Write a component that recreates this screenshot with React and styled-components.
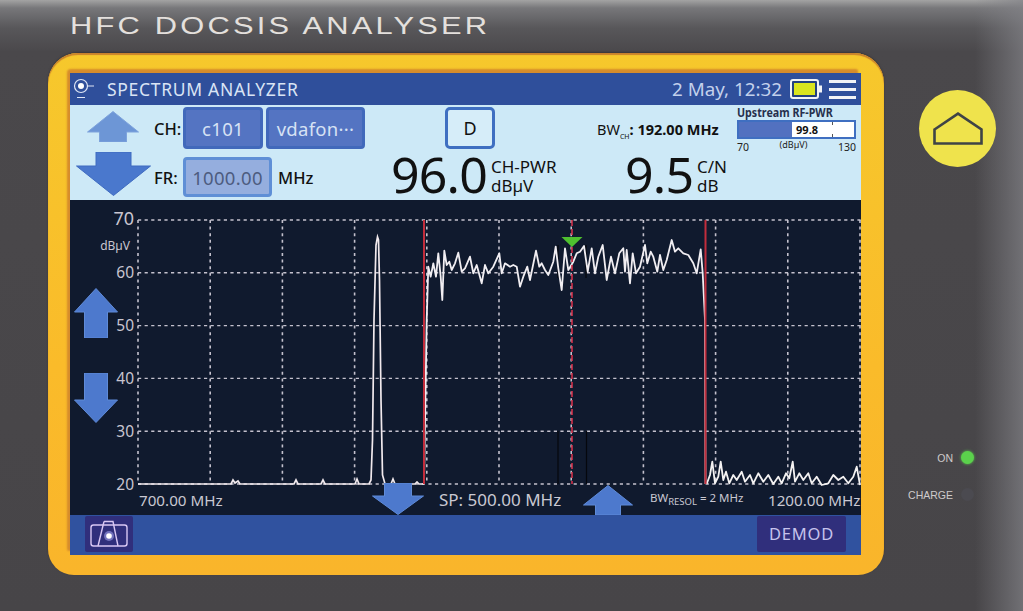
import React from "react";
import styled, { createGlobalStyle } from "styled-components";

const GlobalStyle = createGlobalStyle`
  html, body {
    margin: 0;
    padding: 0;
    background: #4a484b;
  }
  * {
    box-sizing: border-box;
  }
`;

const Device = styled.div`
  width: 1023px;
  height: 611px;
  overflow: hidden;
  font-family: "Noto Sans", sans-serif;
  background:
    linear-gradient(90deg, rgba(130, 130, 135, 0) 975px, rgba(130, 130, 135, 0.7) 1023px),
    linear-gradient(180deg, #a3a3a3 0, #77777a 8px, #58575a 28px, #4a484b 52px, #474548 100%);
`;

const BrandBar = styled.div`
  height: 53px;
  padding: 13px 0 0 70px;
`;

const Brand = styled.div`
  display: inline-block;
  font-family: "Liberation Sans", sans-serif;
  font-size: 24px;
  line-height: 26px;
  letter-spacing: 2.5px;
  color: #e4e0dd;
  white-space: nowrap;
  transform: scaleX(1.285);
  transform-origin: left center;
`;

const DeviceBody = styled.div`
  display: flex;
  padding-left: 48px;
`;

const Bezel = styled.div`
  width: 836px;
  height: 522px;
  padding: 20px 23px 20px 22px;
  border-radius: 30px 30px 26px 26px;
  background: linear-gradient(180deg, #f6c82c 0, #fabb2a 60%, #f9b52b 100%);
  box-shadow: inset 0 2px 1px #c9812c, 0 -1px 2px #3a3638;
`;

const Screen = styled.div`
  width: 791px;
  height: 482px;
  display: flex;
  flex-direction: column;
  box-shadow: -3px -4px 2px #d68c2b;
  border-radius: 4px 2px 0 2px;
  background: #101a2e;
`;

const TitleBar = styled.div`
  height: 32px;
  flex: none;
  display: flex;
  align-items: center;
  padding: 0 5px 0 3px;
  background: #2f4f9b;
  color: #d9e4f5;
`;

const TitleText = styled.div`
  margin-left: 12px;
  font-size: 17.5px;
  letter-spacing: 0.7px;
  flex: 1;
`;

const Clock = styled.div`
  font-size: 18.8px;
  margin-right: 8px;
  color: #c3d1ec;
`;

const Burger = styled.div`
  width: 27px;
  height: 19px;
  margin-left: 7px;
  display: flex;
  flex-direction: column;
  justify-content: space-between;
  span {
    height: 3px;
    background: #f2f3f6;
  }
`;

const InfoPanel = styled.div`
  height: 95px;
  flex: none;
  display: flex;
  background: #cde9f7;
  color: #111;
`;

const ArrowStack = styled.div`
  width: 84px;
  padding: 6px 0 0 2px;
  display: flex;
  flex-direction: column;
  align-items: center;
  gap: 10px;
`;

const TuneColumn = styled.div`
  width: 216px;
  padding-top: 2px;
  display: flex;
  flex-direction: column;
  gap: 8px;
`;

const TuneRow = styled.div`
  display: flex;
  align-items: center;
  height: ${(p) => p.$height}px;
  font-size: 16.5px;
  font-weight: 500;
`;

const TuneLabel = styled.span`
  width: 29px;
`;

const TuneButton = styled.div`
  width: ${(p) => p.$width}px;
  height: 100%;
  margin-right: ${(p) => p.$gap || 0}px;
  display: flex;
  align-items: center;
  justify-content: center;
  border-radius: 4px;
  border: 3px solid ${(p) => (p.$muted ? "#5f8fd6" : "#4169bb")};
  background: ${(p) => (p.$muted ? "#95aede" : "#5474c2")};
  color: ${(p) => (p.$muted ? "#4d5c80" : "#d7e2f4")};
  font-size: 18.5px;
  font-weight: 400;
  letter-spacing: 0.3px;
  white-space: nowrap;
`;

const ReadoutColumn = styled.div`
  width: 367px;
  display: flex;
  flex-direction: column;
`;

const ReadoutTop = styled.div`
  height: 44px;
  padding-top: 2px;
  display: flex;
  align-items: stretch;
`;

const ModeButton = styled.div`
  width: 50px;
  margin-left: 75px;
  display: flex;
  align-items: center;
  justify-content: center;
  border: 3px solid #3f6fc1;
  border-radius: 5px;
  background: #d6edf9;
  font-size: 18px;
`;

const Bandwidth = styled.div`
  margin-left: 102px;
  margin-top: 12px;
  font-size: 14.5px;
  font-weight: 700;
  white-space: nowrap;
  sub {
    font-size: 7px;
    font-weight: 400;
  }
  span {
    font-weight: 400;
  }
`;

const ReadoutRow = styled.div`
  display: flex;
  padding-left: 21px;
  align-items: center;
  height: 51px;
`;

const BigValue = styled.div`
  font-size: 50px;
  line-height: 51px;
  letter-spacing: -0.8px;
  width: ${(p) => p.$width}px;
`;

const ValueUnits = styled.div`
  width: ${(p) => p.$width}px;
  margin-top: 3px;
  font-size: 17px;
  line-height: 19px;
`;

const Gauge = styled.div`
  width: 119px;
`;

const GaugeTitle = styled.div`
  font-size: 11.5px;
  font-weight: 700;
  line-height: 15px;
  color: #26304d;
  white-space: nowrap;
  transform: scaleX(0.93);
  transform-origin: left center;
`;

const GaugeTrack = styled.div`
  height: 19px;
  display: flex;
  border: 2px solid #3f6fc1;
  background:
    linear-gradient(#555, #555) 93px 0 / 1px 3px no-repeat,
    linear-gradient(#555, #555) 93px 100% / 1px 3px no-repeat,
    #fff;
`;

const GaugeFill = styled.div`
  background: #5271c0;
`;

const GaugeValue = styled.div`
  flex: 1;
  padding-left: 4px;
  font-size: 11px;
  line-height: 15px;
  font-weight: 700;
`;

const GaugeScale = styled.div`
  display: flex;
  justify-content: space-between;
  font-size: 10.5px;
  line-height: 16px;
  color: #222;
  span:nth-child(2) {
    font-size: 9px;
    margin-top: -2px;
  }
`;

const Chart = styled.div`
  position: relative;
  height: 315px;
  flex: none;
  display: flex;
  flex-direction: column;
  background: #101a2e;
`;

const Plot = styled.svg`
  display: block;
  width: 791px;
  height: 288px;
  flex: none;
  overflow: visible;
`;

const AxisText = styled.text`
  fill: #c8c5d0;
  font-family: "Noto Sans", sans-serif;
  font-size: ${(p) => p.$size}px;
  text-anchor: end;
`;

const FreqRow = styled.div`
  flex: 1;
  padding: 0 0 9px 69px;
  display: grid;
  grid-template-columns: 300px 211px 118px auto;
  align-items: center;
  color: #c9c8d2;
  font-size: 15.2px;
  white-space: nowrap;
`;

const SpanText = styled.div`
  font-size: 17px;
`;

const ResolutionText = styled.div`
  font-size: 11.5px;
  sub {
    font-size: 9.5px;
  }
`;

const ArrowSlot = styled.div`
  position: absolute;
  left: ${(p) => p.$left}px;
  top: ${(p) => p.$top}px;
  line-height: 0;
`;

const Footer = styled.div`
  flex: 1;
  display: flex;
  justify-content: space-between;
  align-items: center;
  padding: 0 15px;
  background: #30529f;
`;

const SoftKey = styled.div`
  width: ${(p) => p.$width}px;
  height: 36px;
  margin-bottom: 3px;
  display: flex;
  align-items: center;
  justify-content: center;
  background: #302f7c;
  color: #c6c3ec;
  font-size: 16.5px;
  letter-spacing: 0.8px;
  border-radius: 2px;
`;

const SidePanel = styled.div`
  flex: 1;
  display: flex;
  flex-direction: column;
`;

const HomeButton = styled.div`
  width: 77px;
  height: 77px;
  margin: 37px 0 0 35px;
  display: flex;
  align-items: center;
  justify-content: center;
  border-radius: 50%;
  background: #efe34c;
`;

const LedList = styled.div`
  margin-top: 284px;
  padding-right: 49px;
  display: flex;
  flex-direction: column;
  gap: 24px;
`;

const LedRow = styled.div`
  display: flex;
  align-items: center;
  justify-content: flex-end;
  gap: 8px;
  height: 13px;
  font-family: "Liberation Sans", sans-serif;
  font-size: 10.5px;
  color: #cfcbcb;
`;

const Led = styled.span`
  width: 13px;
  height: 13px;
  border-radius: 50%;
  background: ${(p) => (p.$on ? "#5bd14c" : "#4b4a50")};
  box-shadow: ${(p) => (p.$on ? "0 0 3px #5bd14c" : "none")};
`;

// drawn from the reference at 3x, [x, y] in zoom coords
const zoomed = (pts, ox, oy) => pts.map(([x, y]) => [x / 3 + ox, y / 3 + oy]);

const leftFloor = [
  [138, 484], [231, 484], [233, 480], [235, 483], [238, 481], [240, 484], [294, 484], [296, 480], [298, 484],
  [321, 484], [323, 480], [325, 484], [355, 484], [357, 479], [359, 484], [369, 484], [371, 480], [372.5, 440],
  [374, 320], [376, 245], [377.5, 237], [378.5, 240], [379.5, 280], [381, 400], [382.5, 475], [385, 484],
  [391, 484], [393, 479], [395, 484], [415, 484], [417, 482], [419, 484], [424, 484]
];

const carrier = [
  [424, 484],
  ...zoomed(
    [
      [50, 330], [55, 170], [62, 200], [70, 160], [78, 200], [85, 130], [92, 200], [97, 270], [103, 122], [110, 165],
      [118, 155], [125, 180], [135, 160], [145, 128], [155, 185], [165, 175], [180, 140], [190, 190], [200, 165],
      [215, 220], [225, 165], [235, 190], [250, 170], [268, 130], [275, 190], [285, 160], [300, 170], [310, 165],
      [320, 170], [330, 230], [340, 200], [352, 170], [360, 210], [378, 122], [388, 170], [395, 160], [405, 180],
      [415, 195], [430, 155], [437, 110], [445, 175], [455, 240], [465, 115], [475, 180], [490, 155], [500, 130],
      [510, 125], [522, 108], [533, 185], [545, 115], [555, 190], [565, 140], [578, 105], [590, 210], [603, 140],
      [615, 190], [628, 130], [640, 115], [645, 185], [650, 120], [660, 220], [668, 130], [678, 190], [690, 170],
      [705, 105], [712, 160], [722, 125], [730, 140], [742, 185], [750, 135], [760, 180], [770, 150], [785, 90],
      [795, 125], [805, 115], [820, 130], [835, 135], [850, 160], [860, 190], [872, 118], [878, 190], [885, 330]
    ],
    410,
    210
  ),
  [705.5, 484]
];

const rightFloor = zoomed(
  [
    [680, 192], [690, 165], [697, 125], [705, 190], [715, 170], [722, 125], [730, 180], [738, 155], [748, 190],
    [760, 165], [770, 180], [785, 155], [795, 185], [810, 165], [820, 190], [835, 160], [850, 185], [865, 165],
    [880, 192], [895, 170], [905, 190], [918, 160], [928, 175], [938, 125], [945, 185], [958, 160], [970, 180],
    [985, 160], [995, 190], [1010, 170], [1025, 195], [1045, 190], [1060, 165], [1075, 180], [1090, 170],
    [1105, 190], [1120, 170], [1130, 140], [1140, 195]
  ],
  480,
  420
);

const toPoints = (pts) => pts.map(([x, y]) => `${x.toFixed(1)},${y.toFixed(1)}`).join(" ");

const gridXs = Array.from({ length: 11 }, (_, i) => 138 + i * 72.2);
const gridYs = [220, 272.8, 325.6, 378.4, 431.2, 484];
const axisLabels = ["70", "60", "50", "40", "30", "20"];

const SpectrumPlot = () => (
  <Plot viewBox="70 200 791 288">
    {gridXs.map((x) => (
      <line key={x} x1={x} x2={x} y1="220" y2="484" stroke="#c4c1cd" strokeWidth="1.6" strokeDasharray="3 3.6" />
    ))}
    {gridYs.map((y) => (
      <line key={y} x1="138" x2="861" y1={y} y2={y} stroke="#c4c1cd" strokeWidth="1.4" strokeDasharray="3.2 3.4" />
    ))}
    {axisLabels.map((label, i) => (
      <AxisText key={label} x="134" y={gridYs[i] + (i === 0 ? 5 : 5.5)} $size={i === 0 ? 18 : 15.5}>
        {label}
      </AxisText>
    ))}
    <AxisText x="130" y="250" $size={12}>
      dBµV
    </AxisText>
    <path d="M558 431V484M586.5 431V484M558 245V278M586 245V278" stroke="#05070d" strokeWidth="1.2" />
    <polyline points={toPoints(leftFloor)} fill="none" stroke="#f1e9ed" strokeWidth="1.7" />
    <polyline points={toPoints(carrier)} fill="none" stroke="#f1eef2" strokeWidth="1.8" strokeLinejoin="round" />
    <polyline points={toPoints(rightFloor)} fill="none" stroke="#f4f2f2" strokeWidth="1.8" strokeLinejoin="round" />
    <line x1="424" x2="424" y1="220" y2="484" stroke="#c22d3c" strokeWidth="2" />
    <line x1="705.5" x2="705.5" y1="220" y2="484" stroke="#c22d3c" strokeWidth="2" />
    <line x1="572" x2="572" y1="220" y2="484" stroke="#d0304a" strokeWidth="1.6" strokeDasharray="6 3" />
    <polygon points="561.5,237 582.5,237 572,247" fill="#4fc02f" />
  </Plot>
);

// block arrow; shaft and head sizes are given per use
const BlockArrow = ({ width, height, shaft, head, down, fill = "#4d79cd", edge = "#5f8bd8" }) => {
  const cx = width / 2;
  const sl = cx - shaft / 2;
  const sr = cx + shaft / 2;
  const up = `${cx},0.5 ${width - 0.5},${head} ${sr},${head} ${sr},${height} ${sl},${height} ${sl},${head} 0.5,${head}`;
  return (
    <svg width={width} height={height} viewBox={`0 0 ${width} ${height}`}>
      <polygon
        points={up}
        fill={fill}
        stroke={edge}
        strokeWidth="1"
        transform={down ? `rotate(180 ${cx} ${height / 2})` : undefined}
      />
    </svg>
  );
};

const AnalyzerIcon = () => (
  <svg width="22" height="24" viewBox="0 0 22 24" fill="none" stroke="#dfe6f6" strokeWidth="1.2">
    <circle cx="8" cy="9" r="6.5" />
    <circle cx="8" cy="9" r="3" fill="#fff" stroke="none" />
    <path d="M14.5 9H21M4 20.5H12" />
  </svg>
);

const BatteryIcon = () => (
  <svg width="32" height="20" viewBox="0 0 32 20">
    <rect x="1" y="1" width="27" height="18" rx="2" fill="#23407f" stroke="#f1f3f6" strokeWidth="2" />
    <rect x="4" y="4" width="21" height="12" fill="#d9e41e" />
    <rect x="29" y="6.5" width="3" height="7" fill="#f1f3f6" />
  </svg>
);

const CameraIcon = () => (
  <svg width="40" height="28" viewBox="0 0 40 28" fill="none" stroke="#d9c8f4" strokeWidth="1.4">
    <rect x="2" y="5" width="36" height="21" rx="2.5" />
    <path d="M15 1.5H24L29 26M15 1.5L9 26" />
    <circle cx="20" cy="16" r="5" fill="#8f8fd8" stroke="none" opacity="0.7" />
    <circle cx="20" cy="16" r="2.8" fill="#fff" stroke="none" />
  </svg>
);

const HomeIcon = () => (
  <svg width="50" height="33" viewBox="0 0 50 33" fill="none" stroke="#3f4446" strokeWidth="2.6">
    <path d="M1.5 17.5L25 1.6L48.5 17.5V31.5H1.5Z" strokeLinejoin="miter" />
  </svg>
);

export default function App() {
  return (
    <Device>
      <GlobalStyle />
      <BrandBar>
        <Brand>HFC DOCSIS ANALYSER</Brand>
      </BrandBar>
      <DeviceBody>
        <Bezel>
          <Screen>
            <TitleBar>
              <AnalyzerIcon />
              <TitleText>SPECTRUM ANALYZER</TitleText>
              <Clock>2 May, 12:32</Clock>
              <BatteryIcon />
              <Burger>
                <span />
                <span />
                <span />
              </Burger>
            </TitleBar>
            <InfoPanel>
              <ArrowStack>
                <BlockArrow width={52} height={31} shaft={27} head={21} fill="#6d96d6" edge="#7ea3dc" />
                <BlockArrow width={75} height={44} shaft={35} head={30} down fill="#4a78cd" edge="#3f6bc0" />
              </ArrowStack>
              <TuneColumn>
                <TuneRow $height={42}>
                  <TuneLabel>CH:</TuneLabel>
                  <TuneButton $width={80} $gap={3}>
                    c101
                  </TuneButton>
                  <TuneButton $width={99}>vdafon···</TuneButton>
                </TuneRow>
                <TuneRow $height={40}>
                  <TuneLabel>FR:</TuneLabel>
                  <TuneButton $width={89} $gap={6} $muted>
                    1000.00
                  </TuneButton>
                  MHz
                </TuneRow>
              </TuneColumn>
              <ReadoutColumn>
                <ReadoutTop>
                  <ModeButton>D</ModeButton>
                  <Bandwidth>
                    <span>BW</span>
                    <sub>CH</sub>: 192.00 MHz
                  </Bandwidth>
                </ReadoutTop>
                <ReadoutRow>
                  <BigValue $width={100}>96.0</BigValue>
                  <ValueUnits $width={134}>
                    CH-PWR
                    <br />
                    dBµV
                  </ValueUnits>
                  <BigValue $width={72}>9.5</BigValue>
                  <ValueUnits $width={32}>
                    C/N
                    <br />
                    dB
                  </ValueUnits>
                </ReadoutRow>
              </ReadoutColumn>
              <Gauge>
                <GaugeTitle>Upstream RF-PWR</GaugeTitle>
                <GaugeTrack>
                  <GaugeFill style={{ width: `${((99.8 - 70) / 60) * 100 - 3.5}%` }} />
                  <GaugeValue>99.8</GaugeValue>
                </GaugeTrack>
                <GaugeScale>
                  <span>70</span>
                  <span>(dBµV)</span>
                  <span>130</span>
                </GaugeScale>
              </Gauge>
            </InfoPanel>
            <Chart>
              <SpectrumPlot />
              <FreqRow>
                <div>700.00 MHz</div>
                <SpanText>SP: 500.00 MHz</SpanText>
                <ResolutionText>
                  BW<sub>RESOL</sub> = 2 MHz
                </ResolutionText>
                <div>1200.00 MHz</div>
              </FreqRow>
              <ArrowSlot $left={4} $top={88}>
                <BlockArrow width={44} height={50} shaft={23} head={24} />
              </ArrowSlot>
              <ArrowSlot $left={4} $top={173}>
                <BlockArrow width={44} height={50} shaft={23} head={23} down />
              </ArrowSlot>
              <ArrowSlot $left={302} $top={283}>
                <BlockArrow width={52} height={32} shaft={27} head={19} down />
              </ArrowSlot>
              <ArrowSlot $left={513} $top={285}>
                <BlockArrow width={50} height={30} shaft={25} head={20} />
              </ArrowSlot>
            </Chart>
            <Footer>
              <SoftKey $width={48}>
                <CameraIcon />
              </SoftKey>
              <SoftKey $width={89}>DEMOD</SoftKey>
            </Footer>
          </Screen>
        </Bezel>
        <SidePanel>
          <HomeButton>
            <HomeIcon />
          </HomeButton>
          <LedList>
            <LedRow>
              ON
              <Led $on />
            </LedRow>
            <LedRow>
              CHARGE
              <Led />
            </LedRow>
          </LedList>
        </SidePanel>
      </DeviceBody>
    </Device>
  );
}
